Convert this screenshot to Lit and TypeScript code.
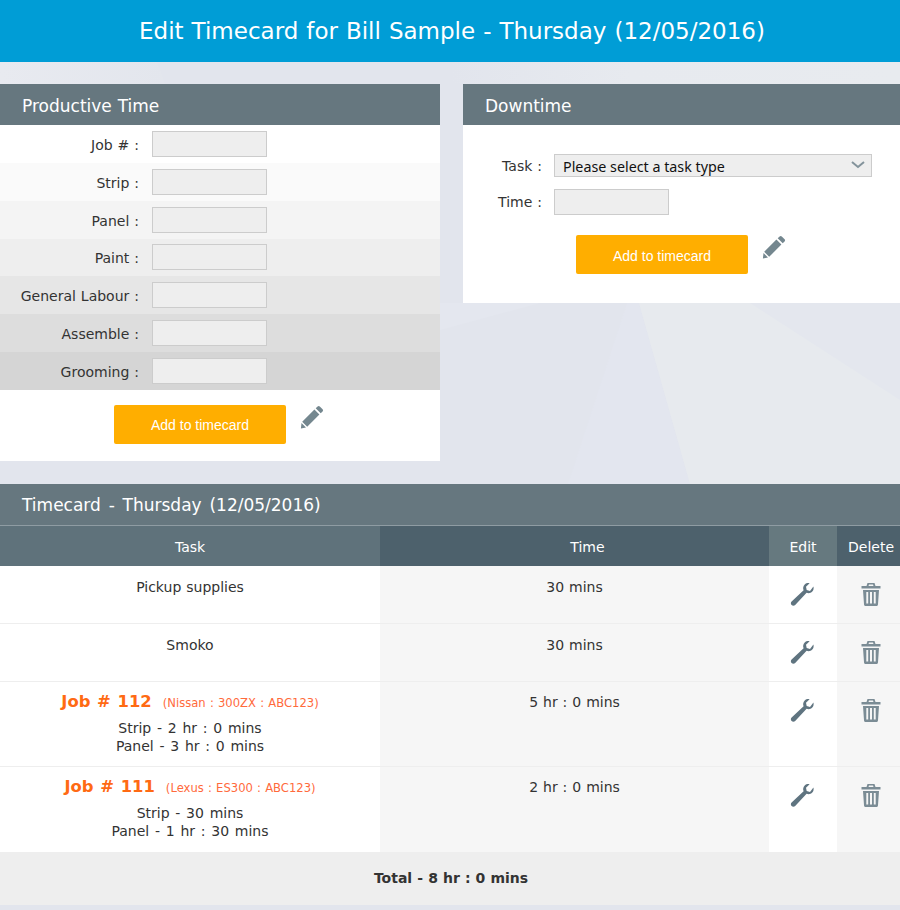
import { LitElement, html, css, svg } from "lit";
import { customElement } from "lit/decorators.js";

const pencil = html`<svg class="pencil" viewBox="0 0 24 24" width="24" height="24"><path d="M17.600 1.400a1.600 1.600 0 0 1 2.200 0l2.800 2.800a1.600 1.600 0 0 1 0 2.200l-1.900 1.900-5-5zM14.400 4.600l5 5L7.200 21.800l-5-5zM1.500 18l4.500 4.500L.9 23.600z" fill="#74878f"/></svg>`;
const wrench = html`<svg viewBox="0 0 24 24" width="24" height="24"><path d="M23.400 4.600c.5 1.700.2 3.700-1.100 5-1.500 1.600-3.800 2-5.700 1.200L5.200 22.900c-1 1-2.600 1-3.600.1-1-1-1-2.600 0-3.600l12-11.100c-.9-2-.4-4.300 1.100-5.800 1.300-1.300 3.200-1.700 4.900-1.300l-3.600 3.600.7 3.300 3.300.8z" fill="#5f7480"/></svg>`;
const trash = html`<svg viewBox="0 0 20 24" width="20" height="24"><path fill-rule="evenodd" d="M6.500 1h7l1 3H19.500v2.600h-19V4H5.500zM8 2.600l-.5 1.400h5l-.5-1.400zM2 8h16l-1 14.200c0 1-.7 1.800-1.600 1.800H4.600c-.9 0-1.600-.8-1.600-1.800zM5.300 10v11.500h1.900V10zM9 10v11.500h2V10zM12.800 10v11.500h1.900V10z" fill="#7b8c95"/></svg>`;

@customElement("app-root")
export class AppRoot extends LitElement {
  static styles = css`
    :host { display: block; position: relative; width: 900px; height: 910px; overflow: hidden; background: #e2e5ed; font-family: "DejaVu Sans", Verdana, sans-serif; color: #333; font-size: 14px; word-spacing: .5px; }
    .bg { position: absolute; left: 0; top: 0; width: 900px; height: 910px; }
    .page { position: relative; }
    .top { box-sizing: border-box; height: 62px; padding-left: 4px; background: #009dd6; color: #fff; font-size: 23px; word-spacing: .7px; display: flex; align-items: center; justify-content: center; }
    .cols { display: flex; justify-content: space-between; padding-top: 22px; align-items: flex-start; }
    .panel { background: #fff; }
    .left { width: 440px; }
    .right { width: 437px; height: 219px; }
    .phead { box-sizing: border-box; height: 41px; background: #66777f; color: #fff; font-size: 17px; display: flex; align-items: center; padding: 2px 0 0 22px; }
    .row { height: 37.857px; display: flex; align-items: center; }
    .row label { width: 139px; text-align: right; padding-top: 2px; }
    .field { box-sizing: border-box; width: 115px; height: 26px; margin-left: 13px; background: #eee; border: 1px solid #ccc; }
    .actions { display: flex; justify-content: center; }
    .left .actions { padding: 15px 0 17px; margin-left: -2px; gap: 14px; }
    .btn { width: 172px; height: 39px; border: 0; border-radius: 2px; background: #ffae00; color: #fff; font: 14px "Liberation Sans", Arial, sans-serif; padding: 2px 0 0; }
    .pencil { display: block; }
    .dt { padding: 29px 0 0 35px; }
    .dtrow { display: flex; align-items: center; margin-bottom: 12px; }
    .dtrow label { width: 44px; text-align: right; white-space: nowrap; }
    .selwrap { position: relative; margin-left: 12px; }
    select { appearance: none; box-sizing: border-box; display: block; width: 318px; height: 23px; border: 1px solid #ccc; background: #eee; font: 14.3px "Noto Sans", sans-serif; color: #111; padding: 1px 0 0 8px; border-radius: 0; }
    .chev { position: absolute; right: 7px; top: 7px; }
    .dt .field { margin-left: 12px; }
    .dt .actions { justify-content: flex-start; padding: 8px 0 0 78px; gap: 14px; }
    .card { margin-top: 23px; }
    .thead { height: 42px; box-sizing: border-box; background: #66777f; color: #fff; font-size: 17px; word-spacing: 2.400px; display: flex; align-items: center; padding: 1px 0 0 22px; border-bottom: 1px solid #8f9ca3; }
    .grid { display: grid; grid-template-columns: 380px 389px 68px 63px; }
    .hc { box-sizing: border-box; height: 40px; display: flex; align-items: center; justify-content: center; color: #fff; padding-top: 2px; }
    .h1 { background: #5f727b; }
    .h2 { background: #4d616c; }
    .h3 { background: #66797f; }
    .timeh { padding-left: 26px; }
    .delh { padding-left: 5px; }
    .c { border-bottom: 1px solid #eee; text-align: center; box-sizing: border-box; }
    .a { background: #fff; }
    .b { background: #f6f6f6; }
    .t { padding-top: 12px; line-height: 18px; }
    .sm { height: 58px; }
    .lg { height: 85px; }
    .t.lg { padding-top: 11px; }
    .ic { display: flex; justify-content: center; padding-top: 16px; }
    .ic svg { position: relative; }
    .edit svg { left: -1px; }
    .del svg { left: 2px; }
    .last { border-bottom: 0; }
    .job { color: #ff6a13; font-weight: 700; font-size: 16.4px; line-height: 18px; word-spacing: 1px; }
    .meta { color: #ff6a3c; font-size: 11.6px; font-weight: 400; margin-left: 11px; word-spacing: .5px; }
    .sub { margin-top: 7px; word-spacing: 1.300px; }
    .total { height: 53px; background: #eee; display: flex; align-items: center; justify-content: center; padding-left: 2px; font-weight: 700; word-spacing: .2px; }
  `;

  private row(task: unknown, time: string, h: string, last = false) {
    const l = last ? "last" : "";
    return html`
      <div class="c a t ${h} ${l}">${task}</div>
      <div class="c b t ${h} ${l}">${time}</div>
      <div class="c a ic edit ${h} ${l}">${wrench}</div>
      <div class="c b ic del ${h} ${l}">${trash}</div>`;
  }

  private job(n: string, meta: string, a: string, b: string) {
    return html`<div class="job">Job # ${n}<span class="meta">(${meta})</span></div><div class="sub">${a}<br />${b}</div>`;
  }

  render() {
    const shades = ["#ffffff", "#fafafa", "#f4f4f4", "#eeeeee", "#e6e6e6", "#dddddd", "#d5d5d5"];
    const names = ["Job #", "Strip", "Panel", "Paint", "General Labour", "Assemble", "Grooming"];
    return html`
      <svg class="bg" viewBox="0 0 900 910">${svg`
        <defs>
          <linearGradient id="tl" x1="0" x2="1" y1="0" y2="0"><stop offset="0" stop-color="#e8eaf0"/><stop offset="1" stop-color="#e3e6ed"/></linearGradient>
          <linearGradient id="tr" x1="0" x2="1" y1="0" y2="0"><stop offset="0" stop-color="#e2e5ed"/><stop offset=".4" stop-color="#e7eaef"/><stop offset="1" stop-color="#e8ebef"/></linearGradient>
        </defs>
        <polygon points="0,62 157,62 165,84 0,84" fill="url(#tl)"/>
        <rect x="450" y="62" width="450" height="22" fill="url(#tr)"/>
        <polygon points="440,303 540,303 440,330" fill="#e4e7ef"/>
        <polygon points="627,303 639,303 690,484 568,484" fill="#e3e6ef"/>
        <polygon points="639,303 900,303 900,484 690,484" fill="#e7eaee"/>
        <polygon points="750,303 900,303 900,400" fill="#e4e7ee"/>
      `}</svg>
      <div class="page">
        <div class="top">Edit Timecard for Bill Sample - Thursday (12/05/2016)</div>
        <div class="cols">
          <section class="panel left">
            <div class="phead">Productive Time</div>
            ${names.map((n, i) => html`<div class="row" style="background:${shades[i]}"><label>${n} :</label><div class="field"></div></div>`)}
            <div class="actions"><button class="btn">Add to timecard</button>${pencil}</div>
          </section>
          <section class="panel right">
            <div class="phead">Downtime</div>
            <div class="dt">
              <div class="dtrow"><label>Task :</label><div class="selwrap"><select><option>Please select a task type</option></select><svg class="chev" width="14" height="8" viewBox="0 0 14 8"><path d="M1 1l6 5 6-5" fill="none" stroke="#83939b" stroke-width="2"/></svg></div></div>
              <div class="dtrow"><label>Time :</label><div class="field"></div></div>
              <div class="actions"><button class="btn">Add to timecard</button>${pencil}</div>
            </div>
          </section>
        </div>
        <section class="card">
          <div class="thead">Timecard - Thursday (12/05/2016)</div>
          <div class="grid">
            <div class="hc h1">Task</div><div class="hc h2 timeh">Time</div><div class="hc h3">Edit</div><div class="hc h2 delh">Delete</div>
            ${this.row("Pickup supplies", "30 mins", "sm")}
            ${this.row("Smoko", "30 mins", "sm")}
            ${this.row(this.job("112", "Nissan : 300ZX : ABC123", "Strip - 2 hr : 0 mins", "Panel - 3 hr : 0 mins"), "5 hr : 0 mins", "lg")}
            ${this.row(this.job("111", "Lexus : ES300 : ABC123", "Strip - 30 mins", "Panel - 1 hr : 30 mins"), "2 hr : 0 mins", "lg", true)}
          </div>
          <div class="total">Total - 8 hr : 0 mins</div>
        </section>
      </div>`;
  }
}
